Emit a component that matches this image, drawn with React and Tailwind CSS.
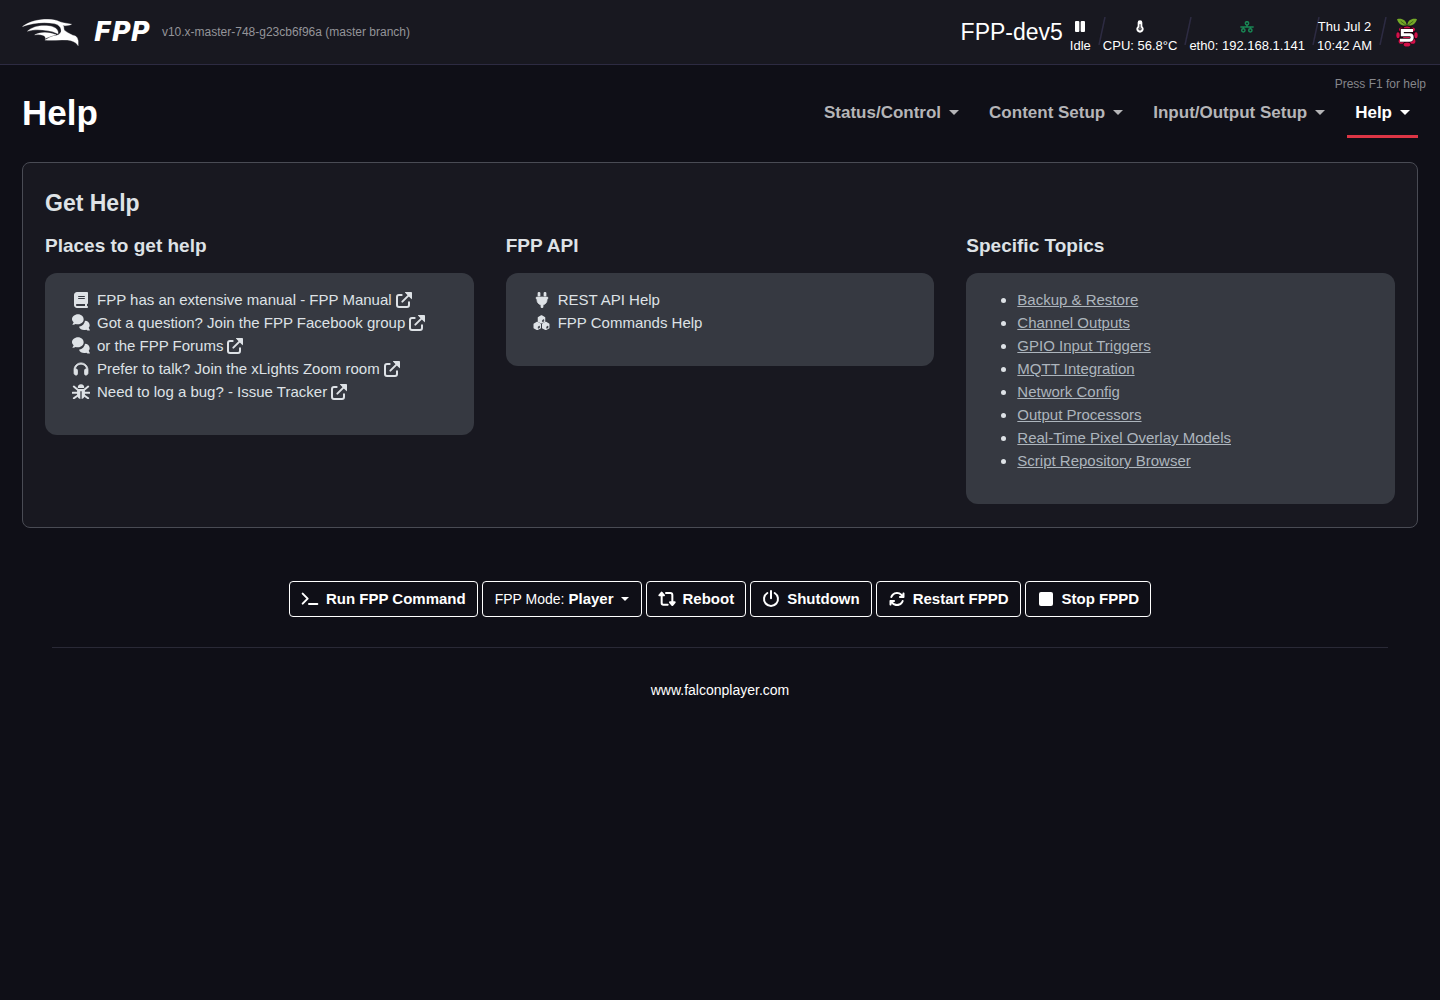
import React, { useState } from 'react';
import { FaArrowsRotate, FaBook, FaHeadphones, FaPlug } from 'react-icons/fa6';

const navItems = ['Status/Control', 'Content Setup', 'Input/Output Setup', 'Help'];

const places = [
  { icon: BookIcon, text: 'FPP has an extensive manual - FPP Manual' },
  { icon: CommentsIcon, text: 'Got a question? Join the FPP Facebook group' },
  { icon: CommentsIcon, text: 'or the FPP Forums' },
  { icon: HeadphonesIcon, text: 'Prefer to talk? Join the xLights Zoom room' },
  { icon: BugIcon, text: 'Need to log a bug? - Issue Tracker' },
];

const apiLinks = [
  { icon: PlugIcon, text: 'REST API Help' },
  { icon: CubesIcon, text: 'FPP Commands Help' },
];

const topics = [
  'Backup & Restore',
  'Channel Outputs',
  'GPIO Input Triggers',
  'MQTT Integration',
  'Network Config',
  'Output Processors',
  'Real-Time Pixel Overlay Models',
  'Script Repository Browser',
];

function FalconLogo() {
  return (
    <svg viewBox="38 40 170 82" className="h-[27px] w-[57px]" fill="#fff" stroke="#fff" strokeWidth="1" aria-hidden="true">
      <path d="M38 63C58 48 84 41 116 41C130 41 141 44 153 49C164 53 176 53 187 56C179 60 170 61 160 60C166 64 162 69 165 74C175 82 188 89 199 92L204 97L207 106V121C199 109 186 105 174 104C150 102 129 106 106 104C117 98 122 95 132 92C144 91 153 86 155 79C157 66 148 57 134 54C104 48 68 52 38 63Z" />
      <path d="M53 77C68 63 92 58 118 61C137 63 148 72 146 85C137 82 129 78 116 76C94 72 75 71 53 77Z" />
      <path d="M75 88C92 80 113 78 140 88C130 91 121 94 107 99C109 94 105 91 99 89C92 87 84 87 75 88Z" />
    </svg>
  );
}

function PauseIcon() {
  return (
    <svg viewBox="0 0 30 33" className="h-[11px] w-[10px]" fill="currentColor" aria-hidden="true">
      <rect width="13" height="33" rx="3" />
      <rect x="17" width="13" height="33" rx="3" />
    </svg>
  );
}

function ThermometerIcon() {
  return (
    <svg viewBox="0 0 24 38" className="h-[13px] w-2" aria-hidden="true">
      <path d="M5 7a7 7 0 0 1 14 0v11a11 11 0 1 1-14 0z" fill="currentColor" />
      <circle cx="12" cy="26" r="5" fill="#181820" />
      <path d="M12 12v10" stroke="#181820" strokeWidth="3" />
      <circle cx="12" cy="26" r="2" fill="currentColor" />
    </svg>
  );
}

function NetworkIcon() {
  return (
    <svg viewBox="0 0 42 36" className="h-[12px] w-[14px]" fill="none" stroke="#198754" strokeWidth="4.500" aria-hidden="true">
      <circle cx="21" cy="7" r="5" />
      <circle cx="10" cy="28" r="5" />
      <circle cx="31" cy="28" r="5" />
      <path d="M21 12v6M1 18h40M10 18v5M31 18v5" />
    </svg>
  );
}

function PiLogo() {
  return (
    <svg viewBox="0 0 66 86" className="h-[29px] w-[22px]" aria-hidden="true">
      <path d="M33 27C43 20 57 27 58 39C67 45 67 59 59 65C56 76 43 80 33 86C23 80 10 76 7 65C-1 59 -1 45 8 39C9 27 23 20 33 27Z" fill="#1d0612" />
      <g fill="#d5114a">
        <ellipse cx="33" cy="30" rx="10" ry="5" />
        <ellipse cx="16" cy="34" rx="7" ry="6" />
        <ellipse cx="50" cy="34" rx="7" ry="6" />
        <ellipse cx="6" cy="51" rx="5" ry="9" />
        <ellipse cx="60" cy="51" rx="5" ry="9" />
        <circle cx="33" cy="54" r="12" />
        <circle cx="16" cy="69" r="8" />
        <circle cx="50" cy="69" r="8" />
        <ellipse cx="33" cy="79" rx="10" ry="6" />
      </g>
      <path d="M3 3C16 -1 31 5 32 21C17 25 7 16 3 3ZM63 3C50 -1 35 5 34 21C49 25 59 16 63 3Z" fill="#75a928" />
      <path d="M14 9L30 21M52 9L36 21" stroke="#24420e" strokeWidth="2" />
      <path d="M51 37H19V50H41C51 50 51 66 41 66H12" fill="none" stroke="#1d0612" strokeWidth="13" />
      <path d="M51 37H19V50H41C51 50 51 66 41 66H12" fill="none" stroke="#fff" strokeWidth="9" />
    </svg>
  );
}

function BookIcon() {
  return <FaBook className="h-4 w-[18px]" />;
}

function HeadphonesIcon() {
  return <FaHeadphones className="h-[14px] w-[18px]" stroke="currentColor" strokeWidth="28" />;
}

function PlugIcon() {
  return <FaPlug className="h-4 w-[18px]" stroke="currentColor" strokeWidth="24" />;
}

function CommentsIcon() {
  return (
    <svg viewBox="0 0 54 51" className="h-[17px] w-[18px]" fill="currentColor" aria-hidden="true">
      <path d="M18 1c10 0 17 7 17 15s-7 15-17 15c-3 0-5 0-7-1-3 2-7 3-10 2l4-7C2 22 0 19 0 16 0 8 8 1 18 1z" />
      <path d="M39 20c8 0 14 6 14 13 0 4-1 6-3 8l4 8c-4 2-8 0-11-2-10 3-19-1-22-9 10-2 17-9 18-18z" />
    </svg>
  );
}

function BugIcon() {
  return (
    <svg viewBox="0 0 54 46" className="h-[15px] w-[18px]" fill="currentColor" aria-hidden="true">
      <path d="M17 12a10 11 0 0 1 20 0z" />
      <path d="M15 15h24v17c0 8-4 12-10 14V22h-4v24c-6-2-10-6-10-14z" />
      <path d="M5 8l11 9M49 8l-11 9M1 27h15M53 27H38M5 44l12-9M49 44l-12-9" fill="none" stroke="currentColor" strokeWidth="6" strokeLinecap="round" />
    </svg>
  );
}

function CubesIcon() {
  return (
    <svg viewBox="0 0 50 46" className="h-[15px] w-[17px]" aria-hidden="true">
      <g fill="currentColor" stroke="currentColor" strokeWidth="5" strokeLinejoin="round">
        <path d="M25 3l9 5v11l-9 5-9-5V8z" />
        <path d="M12 23l9 5v11l-9 5-9-5V28z" />
        <path d="M38 23l9 5v11l-9 5-9-5V28z" />
      </g>
      <path d="M28 16l4-2v5l-4 2zM15 36l4-2v5l-4 2zM41 36l4-2v5l-4 2z" fill="#363941" stroke="#363941" strokeWidth="2" />
      <path d="M25 26v19" stroke="#363941" strokeWidth="2" />
    </svg>
  );
}

function ExternalIcon() {
  return (
    <svg viewBox="0 0 48 48" className="ml-1 size-4 shrink-0" fill="none" stroke="currentColor" aria-hidden="true">
      <path d="M17 9H9Q3 9 3 15V39Q3 45 9 45H33Q39 45 39 39V31" strokeWidth="6" strokeLinecap="round" />
      <path d="M19 29L38 10" strokeWidth="6" strokeLinecap="round" />
      <path d="M28 1.500H46.500V20z" fill="currentColor" strokeWidth="3" strokeLinejoin="round" />
    </svg>
  );
}

function TerminalIcon() {
  return (
    <svg viewBox="0 0 54 48" className="h-4 w-[18px]" fill="none" stroke="currentColor" strokeWidth="6" strokeLinecap="round" strokeLinejoin="round" aria-hidden="true">
      <path d="M5 8l15 15L5 38M24 39h25" />
    </svg>
  );
}

function RebootIcon() {
  return (
    <svg viewBox="0 0 54 48" className="h-4 w-[18px]" fill="none" stroke="currentColor" strokeWidth="6" strokeLinejoin="round" aria-hidden="true">
      <path d="M11 12v24q0 5 5 5h13M24 6h13q6 0 6 6v24" strokeLinecap="round" />
      <path d="M11 5l7 8H4zM43 42l7-8H36z" fill="currentColor" />
    </svg>
  );
}

function PowerIcon() {
  return (
    <svg viewBox="0 0 54 54" className="size-[18px]" fill="none" stroke="currentColor" strokeWidth="6" strokeLinecap="round" aria-hidden="true">
      <path d="M27 3v22M16 9a21 21 0 1 0 22 0" />
    </svg>
  );
}

function RestartIcon() {
  return <FaArrowsRotate className="h-4 w-[18px]" />;
}

function StopIcon() {
  return (
    <svg viewBox="0 0 18 14" className="h-[14px] w-[18px]" fill="currentColor" aria-hidden="true">
      <rect x="2" width="14" height="14" rx="2" />
    </svg>
  );
}

function Caret({ className }) {
  return (
    <svg viewBox="0 0 10 5" className={className} fill="currentColor" aria-hidden="true">
      <path d="M0 0h10L5 5z" />
    </svg>
  );
}

function Divider() {
  return (
    <svg viewBox="0 0 20 28" className="-mx-1 h-7 w-5 shrink-0 self-start" fill="none" aria-hidden="true">
      <path d="M18 0L12 28" stroke="#2d2b42" strokeWidth="1.500" />
    </svg>
  );
}

function Status({ icon, label }) {
  return (
    <div className="flex flex-col items-center">
      <span className="flex h-[18px] items-center">{icon}</span>
      <span className="leading-[19px]">{label}</span>
    </div>
  );
}

function HelpBox({ title, children }) {
  return (
    <section>
      <h3 className="mb-4 text-[19px] leading-[23px] font-bold">{title}</h3>
      <ul className="rounded-xl bg-[#363941] pt-[15px] pr-4 pb-8 pl-[27px] text-[15px] leading-[23px]">{children}</ul>
    </section>
  );
}

function IconLink({ icon: Icon, text, external }) {
  return (
    <li>
      <a href="#" className="flex items-center">
        <span className="mr-[7px] flex w-[18px] shrink-0 justify-center">
          <Icon />
        </span>
        {text}
        {external && <ExternalIcon />}
      </a>
    </li>
  );
}

function ActionButton({ icon: Icon, children }) {
  return (
    <button type="button" className="flex h-9 items-center gap-[7px] rounded border border-white px-[11px] font-bold">
      <Icon />
      {children}
    </button>
  );
}

export default function App() {
  const [active, setActive] = useState('Help');

  return (
    <div className="min-h-screen bg-[#0f0f17] font-['Liberation_Sans',Arial,sans-serif] text-[15px] text-white">
      <header className="flex h-[65px] items-center justify-between border-b border-[#2d2b42] bg-[#181820] px-[22px]">
        <div className="flex items-center">
          <FalconLogo />
          <span className="ml-[15px] font-['DejaVu_Sans',sans-serif] text-[26px] leading-7 font-bold italic">FPP</span>
          <span className="ml-3 text-xs text-[#949499]">v10.x-master-748-g23cb6f96a (master branch)</span>
        </div>
        <div className="flex items-center text-[13px]">
          <span className="mr-[7px] text-[23px]">FPP-dev5</span>
          <div className="flex items-center pt-2">
            <Status icon={<PauseIcon />} label="Idle" />
            <Divider />
            <Status icon={<ThermometerIcon />} label="CPU: 56.8°C" />
            <Divider />
            <Status icon={<NetworkIcon />} label="eth0: 192.168.1.141" />
            <Divider />
            <div className="text-center leading-[19px]">
              <div>Thu Jul 2</div>
              <div>10:42 AM</div>
            </div>
            <Divider />
          </div>
          <span className="ml-3">
            <PiLogo />
          </span>
        </div>
      </header>

      <p className="pt-[11px] pr-[14px] text-right text-xs leading-4 text-[#86868b]">Press F1 for help</p>

      <div className="mx-[22px] flex items-start justify-between">
        <h1 className="text-[35px] leading-[42px] font-bold">Help</h1>
        <nav className="flex gap-[14px]">
          {navItems.map(item => (
            <button
              key={item}
              type="button"
              onClick={() => setActive(item)}
              className={`flex h-[46px] items-center border-b-3 px-2 pb-[2px] text-[17px] font-bold ${
                item === active ? 'border-[#dc3545] text-white' : 'border-transparent text-[#b5b5b8]'
              }`}
            >
              {item}
              <Caret className="ml-2 h-[5px] w-[10px]" />
            </button>
          ))}
        </nav>
      </div>

      <main className="mx-[22px] mt-6 rounded-lg border border-[#494b54] bg-[#181820] px-[22px] pt-[26px] pb-[23px] text-[#dee2e6]">
        <h2 className="text-[23px] leading-[28px] font-bold">Get Help</h2>
        <div className="mt-[17px] grid grid-cols-3 items-start gap-8">
          <HelpBox title="Places to get help">
            {places.map(p => (
              <IconLink key={p.text} icon={p.icon} text={p.text} external />
            ))}
          </HelpBox>
          <HelpBox title="FPP API">
            {apiLinks.map(p => (
              <IconLink key={p.text} icon={p.icon} text={p.text} />
            ))}
          </HelpBox>
          <HelpBox title="Specific Topics">
            {topics.map(topic => (
              <li key={topic} className="ml-6 list-disc">
                <a href="#" className="text-[#adb5bd] underline">{topic}</a>
              </li>
            ))}
          </HelpBox>
        </div>
      </main>

      <footer className="mx-[52px] mt-[53px]">
        <div className="flex flex-wrap justify-center gap-1 border-b border-[#292936] pb-[30px]">
          <ActionButton icon={TerminalIcon}>Run FPP Command</ActionButton>
          <button type="button" className="flex h-9 items-center rounded border border-white px-3">
            <span className="text-[14px]">FPP Mode:</span>
            <b className="ml-1">Player</b>
            <Caret className="ml-[7px] h-1 w-2" />
          </button>
          <ActionButton icon={RebootIcon}>Reboot</ActionButton>
          <ActionButton icon={PowerIcon}>Shutdown</ActionButton>
          <ActionButton icon={RestartIcon}>Restart FPPD</ActionButton>
          <ActionButton icon={StopIcon}>Stop FPPD</ActionButton>
        </div>
        <p className="mt-8 text-center text-[14px] leading-[21px]">
          <a href="#">www.falconplayer.com</a>
        </p>
      </footer>
    </div>
  );
}
